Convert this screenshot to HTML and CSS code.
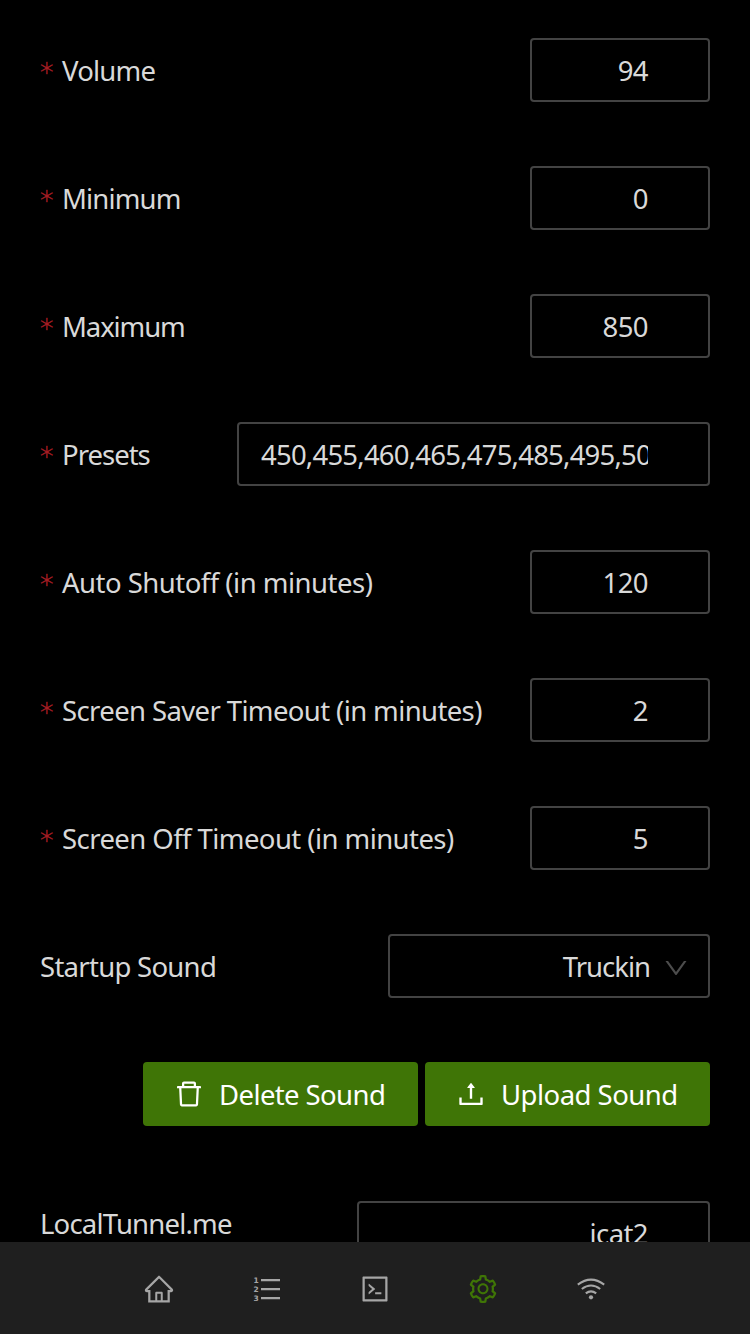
FILE: index.html
```html
<!DOCTYPE html>
<html lang="en">
<head>
<meta charset="utf-8">
<title>Settings</title>
<link rel="stylesheet" href="styles.css">
</head>
<body>
<main class="form">
  <div class="row"><label class="label required"><span class="t-volume">Volume</span></label><div class="field"><span class="value">94</span></div></div>
  <div class="row"><label class="label required"><span class="t-minimum">Minimum</span></label><div class="field"><span class="value">0</span></div></div>
  <div class="row"><label class="label required"><span class="t-maximum">Maximum</span></label><div class="field"><span class="value">850</span></div></div>
  <div class="row"><label class="label required"><span class="t-presets">Presets</span></label><div class="field field-presets"><span class="value value-clipped">450,455,460,465,475,485,495,50</span></div></div>
  <div class="row"><label class="label required"><span class="t-shutoff">Auto Shutoff (in minutes)</span></label><div class="field"><span class="value">120</span></div></div>
  <div class="row"><label class="label required"><span class="t-saver">Screen Saver Timeout (in minutes)</span></label><div class="field"><span class="value">2</span></div></div>
  <div class="row"><label class="label required"><span class="t-off">Screen Off Timeout (in minutes)</span></label><div class="field"><span class="value">5</span></div></div>
  <div class="row"><label class="label"><span class="t-startup">Startup Sound</span></label><div class="field field-select"><span class="t-truckin">Truckin</span><svg class="arrow" viewBox="0 0 1024 1024"><path d="M884 256h-75c-5.1 0-9.9 2.5-12.9 6.6L512 654.2 227.9 262.6c-3-4.1-7.8-6.6-12.9-6.6h-75c-6.5 0-10.3 7.4-6.5 12.7l352.6 486.1c12.8 17.6 39 17.6 51.7 0l352.6-486.1c3.9-5.3.1-12.7-6.4-12.7z"/></svg></div></div>
  <div class="actions">
    <button class="button button-delete"><svg class="button-icon" viewBox="0 0 1024 1024"><path d="M360 184h-8c4.4 0 8-3.6 8-8v8h304v-8c0 4.4 3.6 8 8 8h-8v72h72v-80c0-35.3-28.7-64-64-64H352c-35.3 0-64 28.7-64 64v80h72v-72zm504 72H160c-17.7 0-32 14.3-32 32v32c0 4.4 3.6 8 8 8h60.4l24.7 523c1.6 34.1 29.8 61 63.9 61h454c34.2 0 62.3-26.8 63.9-61l24.7-523H888c4.4 0 8-3.6 8-8v-32c0-17.7-14.3-32-32-32zM731.3 840H292.7l-24.2-512h487l-24.2 512z"/></svg><span class="t-delete">Delete Sound</span></button>
    <button class="button button-upload"><svg class="button-icon" viewBox="0 0 1024 1024"><path d="M400 317.7h73.9V656c0 4.4 3.6 8 8 8h60c4.4 0 8-3.6 8-8V317.7H624c6.7 0 10.4-7.7 6.3-12.9L518.3 163a8 8 0 00-12.6 0l-112 141.7c-4.1 5.3-.4 13 6.3 13zM878 626h-60c-4.4 0-8 3.6-8 8v154H214V634c0-4.4-3.6-8-8-8h-60c-4.4 0-8 3.6-8 8v198c0 17.7 14.3 32 32 32h684c17.7 0 32-14.3 32-32V634c0-4.4-3.6-8-8-8z"/></svg><span class="t-upload">Upload Sound</span></button>
  </div>
  <div class="row row-tunnel"><label class="label label-tunnel"><span class="t-tunnel">LocalTunnel.me</span></label><div class="field field-tunnel"><span class="value">jcat2</span></div></div>
</main>
<nav class="tabs">
  <a class="tab"><svg viewBox="0 0 1024 1024"><path d="M946.5 505L560.1 118.8l-25.9-25.9a31.5 31.5 0 00-44.4 0L77.5 505a63.9 63.9 0 00-18.8 46c.4 35.2 29.7 63.3 64.9 63.3h42.5V940h691.8V614.3h43.4c17.1 0 33.2-6.7 45.3-18.8a63.6 63.6 0 0018.7-45.3c0-17-6.7-33.1-18.8-45.2zM568 868H456V664h112v204zm217.9-325.7V868H632V640c0-22.1-17.9-40-40-40H432c-22.1 0-40 17.9-40 40v228H238.1V542.3h-96l370-369.7 23.1 23.1L882 542.3h-96.1z"/></svg></a>
  <a class="tab"><svg viewBox="0 0 32 32"><path d="M10 6h19v2.2H10zM10 15h19v2.2H10zM10 24h19v2.2H10z"/><text class="digit" x="2.6" y="10">1</text><text class="digit" x="2.6" y="19">2</text><text class="digit" x="2.6" y="28">3</text></svg></a>
  <a class="tab"><svg viewBox="0 0 1024 1024"><path d="M516 673c0 4.4 3.4 8 7.5 8h185c4.1 0 7.5-3.6 7.5-8v-48c0-4.4-3.4-8-7.5-8h-185c-4.1 0-7.5 3.6-7.5 8v48zm-194.9 6.1l192-161c3.8-3.2 3.8-9.1 0-12.3l-192-160.9A7.95 7.95 0 00308 351v62.7c0 2.4 1 4.6 2.9 6.1L420.7 512l-109.8 92.2a8.1 8.1 0 00-2.9 6.1V673c0 6.8 7.9 10.5 13.1 6.1zM880 112H144c-17.7 0-32 14.3-32 32v736c0 17.7 14.3 32 32 32h736c17.7 0 32-14.3 32-32V144c0-17.7-14.3-32-32-32zm-40 728H184V184h656v656z"/></svg></a>
  <a class="tab tab-active"><svg viewBox="0 0 1024 1024"><path d="M924.8 625.7l-65.5-56c3.1-19 4.7-38.4 4.7-57.8s-1.6-38.8-4.7-57.8l65.5-56a32.03 32.03 0 009.3-35.2l-.9-2.6a443.74 443.74 0 00-79.7-137.9l-1.8-2.1a32.12 32.12 0 00-35.1-9.5l-81.3 28.9c-30-24.6-63.5-44-99.7-57.6l-15.7-85a32.05 32.05 0 00-25.8-25.7l-2.7-.5c-52.1-9.4-106.9-9.4-159 0l-2.7.5a32.05 32.05 0 00-25.8 25.7l-15.8 85.4a351.86 351.86 0 00-99 57.4l-81.9-29.1a32 32 0 00-35.1 9.5l-1.8 2.1a446.02 446.02 0 00-79.7 137.9l-.9 2.6c-4.5 12.5-.8 26.5 9.3 35.2l66.3 56.6c-3.1 18.8-4.6 38-4.6 57.1 0 19.2 1.5 38.4 4.6 57.1L99 625.5a32.03 32.03 0 00-9.3 35.2l.9 2.6c18.1 50.4 44.9 96.9 79.7 137.9l1.8 2.1a32.12 32.12 0 0035.1 9.5l81.9-29.1c29.8 24.5 63.1 43.9 99 57.4l15.8 85.4a32.05 32.05 0 0025.8 25.7l2.7.5a449.4 449.4 0 00159 0l2.7-.5a32.05 32.05 0 0025.8-25.7l15.7-85a350 350 0 0099.7-57.6l81.3 28.9a32 32 0 0035.1-9.5l1.8-2.1c34.8-41.1 61.6-87.5 79.7-137.9l.9-2.6c4.5-12.3.8-26.3-9.3-35zM788.3 465.9c2.5 15.1 3.8 30.6 3.8 46.1s-1.3 31-3.8 46.1l-6.6 40.1 74.7 63.9a370.03 370.03 0 01-42.6 73.6L721 702.8l-31.4 25.8c-23.9 19.6-50.5 35-79.3 45.8l-38.1 14.3-17.9 97a377.5 377.5 0 01-85 0l-17.9-97.2-37.8-14.5c-28.5-10.8-55-26.2-78.7-45.7l-31.4-25.9-93.4 33.2c-17-22.9-31.2-47.6-42.6-73.6l75.5-64.5-6.5-40c-2.4-14.9-3.7-30.3-3.7-45.5 0-15.3 1.2-30.6 3.7-45.5l6.5-40-75.5-64.5c11.3-26.1 25.6-50.7 42.6-73.6l93.4 33.2 31.4-25.9c23.7-19.5 50.2-34.9 78.7-45.7l37.9-14.3 17.9-97.2c28.1-3.2 56.8-3.2 85 0l17.9 97 38.1 14.3c28.7 10.8 55.4 26.2 79.3 45.8l31.4 25.8 92.8-32.9c17 22.9 31.2 47.6 42.6 73.6L781.8 426l6.5 39.9zM512 326c-97.2 0-176 78.8-176 176s78.8 176 176 176 176-78.8 176-176-78.8-176-176-176zm79.2 255.2A111.6 111.6 0 01512 614c-29.9 0-58-11.7-79.2-32.8A111.6 111.6 0 01400 502c0-29.9 11.7-58 32.8-79.2C454 401.6 482.1 390 512 390c29.9 0 58 11.6 79.2 32.8A111.6 111.6 0 01624 502c0 29.9-11.7 58-32.8 79.2z"/></svg></a>
  <a class="tab"><svg viewBox="0 0 32 32"><path class="wave" d="M2.8 11.6Q16 1.8 29.2 11.6M6.8 16Q16 9 25.2 16M10.8 20.4Q16 16.2 21.2 20.4"/><circle cx="16" cy="24.3" r="2.1"/></svg></a>
</nav>
</body>
</html>
```
FILE: styles.css
```css
* { box-sizing: border-box; }
body {
  margin: 0;
  height: 1334px;
  display: flex;
  flex-direction: column;
  overflow: hidden;
  background: #000;
  color: #d9d9d9;
  font: 27.5px/44px "Noto Sans", "Open Sans", sans-serif;
}
.form {
  flex: 1;
  min-height: 0;
  overflow: hidden;
  padding: 38px 40px 0;
}
.row, .actions {
  display: flex;
  justify-content: space-between;
  height: 64px;
  margin-bottom: 64px;
}
.label {
  display: flex;
  align-items: center;
  padding-top: 2px;
  white-space: nowrap;
}
.required::before {
  content: "*";
  width: 22px;
  color: #a61d24;
  font: 200 27px/44px "DejaVu Sans Light", "DejaVu Sans", sans-serif;
  -webkit-text-stroke: 0.5px #a61d24;
  padding-top: 3px;
}
.field {
  display: flex;
  align-items: center;
  justify-content: flex-end;
  width: 180px;
  height: 64px;
  padding: 2px 60px 0 22px;
  border: 2px solid #434343;
  border-radius: 4px;
}
.value { letter-spacing: -0.6px; white-space: nowrap; }
.value-clipped { width: 387px; overflow: hidden; letter-spacing: -0.78px; }
.field-presets { width: 473px; }
.field-select { width: 322px; padding-right: 18px; }
.field-tunnel { width: 353px; }
.arrow { width: 28px; height: 28px; margin: 1px 0 0 12px; fill: #4c4c4c; }

/* Per-label tracking */
.t-volume { letter-spacing: -0.8px; }
.t-minimum { letter-spacing: -0.85px; }
.t-maximum { letter-spacing: -1.1px; }
.t-presets { letter-spacing: -1px; }
.t-shutoff { letter-spacing: -0.51px; }
.t-saver { letter-spacing: -0.62px; }
.t-off { letter-spacing: -0.57px; }
.t-startup { letter-spacing: -0.72px; }
.t-truckin { letter-spacing: -1px; }
.t-delete { letter-spacing: -0.6px; }
.t-upload { letter-spacing: -0.52px; }
.t-tunnel { letter-spacing: -0.8px; }

.actions { justify-content: flex-end; gap: 7px; margin-bottom: 75px; }
.button {
  display: flex;
  align-items: center;
  height: 64px;
  padding: 2px 0 0 30px;
  border: 0;
  border-radius: 4px;
  background: #3f7506;
  color: #fff;
  font: inherit;
  white-space: nowrap;
}
.button-delete { width: 275px; }
.button-upload { width: 285px; }
.button-icon { width: 32px; height: 32px; margin: 0 14px 2px 0; fill: #fff; }
.label-tunnel { height: 44px; }
.tabs {
  display: flex;
  justify-content: center;
  height: 92px;
  background: #1f1f1f;
}
.tab {
  display: flex;
  align-items: center;
  justify-content: center;
  width: 108px;
  padding-top: 2px;
  fill: #a6a6a6;
}
.tab svg { width: 32px; height: 32px; }
.tab-active { fill: #3f7506; }
.digit { font: bold 7.5px "DejaVu Sans", sans-serif; }
.wave { fill: none; stroke: #a6a6a6; stroke-width: 2.1; }
```
